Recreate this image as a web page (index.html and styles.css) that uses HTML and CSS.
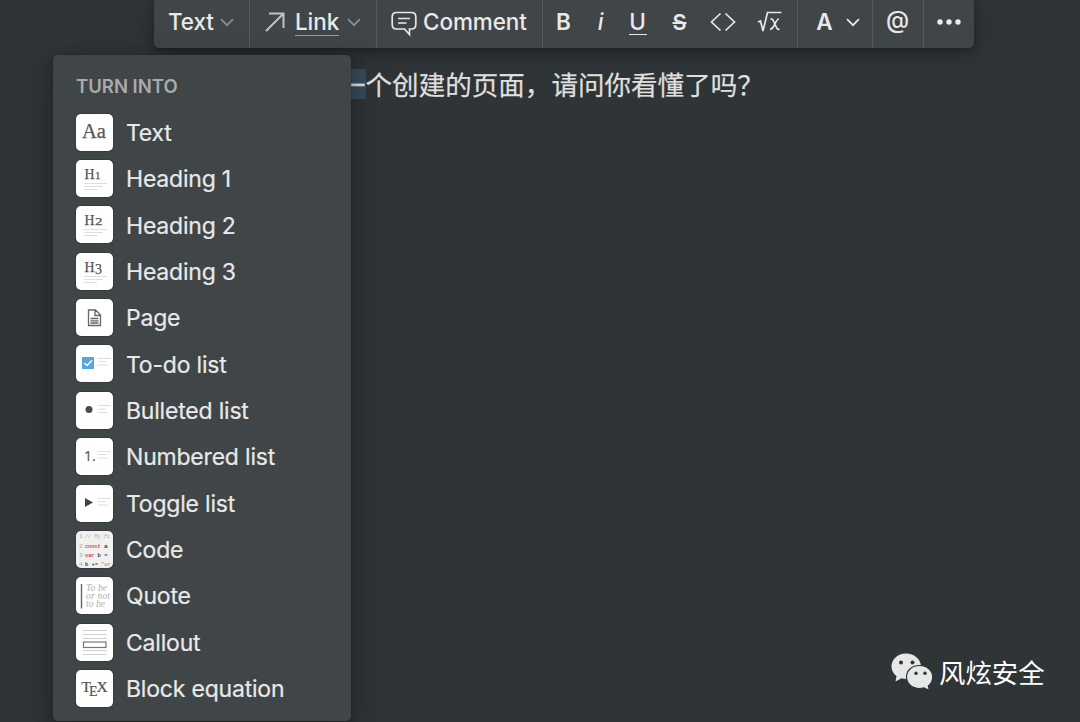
FILE: index.html
```
<!DOCTYPE html>
<html lang="en">
<head>
<meta charset="utf-8">
<title>Turn into</title>
<link rel="stylesheet" href="styles.css">
</head>
<body>
<main class="page">
  <p class="line"><span class="selected">一</span><span>个创建的页面，请问你看懂了吗？</span></p>

  <nav class="toolbar">
    <div class="group group-text"><span class="label">Text</span>
      <svg class="chev dim" viewBox="0 0 14 9"><path d="M1 1.200l6 6 6-6"/></svg></div>
    <div class="group group-link">
      <svg class="arrow" viewBox="0 0 20 20"><path d="M1 19L18.500 1.500M4 1.500H18.500V16"/></svg>
      <span class="label link">Link</span>
      <svg class="chev dim" viewBox="0 0 14 9"><path d="M1 1.200l6 6 6-6"/></svg></div>
    <div class="group group-comment">
      <svg class="bubble" viewBox="0 0 26 26"><path d="M5.500 1.500H20.500Q24.800 1.500 24.800 6V13.500Q24.800 18 20.500 18H18.500V23.500L13.500 18H5.500Q1.200 18 1.200 13.500V6Q1.200 1.500 5.500 1.500ZM7 7.500H19M7 12H15.500"/></svg>
      <span class="label">Comment</span></div>
    <div class="group group-format">
      <span class="glyph bold">B</span>
      <span class="glyph italic">i</span>
      <span class="glyph under">U</span>
      <span class="glyph strike">S</span>
      <svg class="code-icon" viewBox="0 0 26 20"><path d="M10.500 1.500L1.500 10l9 8.500M15.500 1.500l9 8.500-9 8.500"/></svg>
      <svg class="root-icon" viewBox="0 0 26 22"><path d="M1 11l2.500-1 2.500 10L10.500 1.500H24.500M13.500 8Q15.500 7.500 16.500 10L19.500 16.500Q20.500 19 22.500 18M22 8Q20 8 18 13Q15.500 18 13 18.500"/></svg>
    </div>
    <div class="group group-color"><span class="glyph bold">A</span>
      <svg class="chev" viewBox="0 0 14 9"><path d="M1 1.200l6 6 6-6"/></svg></div>
    <div class="group group-at"><span class="at">@</span></div>
    <div class="group group-more"><svg class="dots" viewBox="0 0 24 6"><circle cx="3" cy="3" r="2.700"/><circle cx="12" cy="3" r="2.700"/><circle cx="21" cy="3" r="2.700"/></svg></div>
  </nav>

  <section class="menu">
    <h2 class="menu-title">TURN INTO</h2>
    <ul class="items">
      <li class="item"><svg class="tile" viewBox="0 0 37 37"><text class="serif" x="6" y="24" font-size="20.500" textLength="24" lengthAdjust="spacingAndGlyphs">Aa</text></svg><span>Text</span></li>
      <li class="item"><svg class="tile" viewBox="0 0 37 37"><text class="serif" x="8.500" y="19" font-size="15" textLength="10" lengthAdjust="spacingAndGlyphs">H</text><text class="serif" x="19" y="19" font-size="11">1</text><path class="rule" d="M8 23.500H31M8 26.500H27M8 29.500H21"/></svg><span>Heading 1</span></li>
      <li class="item"><svg class="tile" viewBox="0 0 37 37"><text class="serif" x="8.500" y="19" font-size="15" textLength="10" lengthAdjust="spacingAndGlyphs">H</text><text class="serif" x="19" y="19" font-size="11" textLength="7.500" lengthAdjust="spacingAndGlyphs">2</text><path class="rule" d="M8 23.500H31M8 26.500H27M8 29.500H21"/></svg><span>Heading 2</span></li>
      <li class="item"><svg class="tile" viewBox="0 0 37 37"><text class="serif" x="8.500" y="19" font-size="15" textLength="10" lengthAdjust="spacingAndGlyphs">H</text><text class="serif" x="19" y="21" font-size="14">3</text><path class="rule" d="M8 23.500H31M8 26.500H27M8 29.500H21"/></svg><span>Heading 3</span></li>
      <li class="item"><svg class="tile" viewBox="0 0 37 37"><path class="doc" d="M12.500 11H19.500L24.500 16V26.500H12.500ZM19 11V16.500H24.500M14.500 19.500H22.500M14.500 21.800H22.500M14.500 24H22.500"/></svg><span>Page</span></li>
      <li class="item"><svg class="tile" viewBox="0 0 37 37"><rect x="6" y="12" width="12" height="12" rx=".8" fill="#5ba4df"/><path d="M8.500 18l2.500 2.500 5-5" fill="none" stroke="#fff" stroke-width="1.400"/><path class="rule" d="M21.500 13.500H35M21.500 16.500H30M21.500 20H31.500"/></svg><span>To-do list</span></li>
      <li class="item"><svg class="tile" viewBox="0 0 37 37"><circle cx="13" cy="17.500" r="3.500" fill="#4a4a4a"/><path class="rule" d="M21.500 13.500H35M21.500 17H30M21.500 20.500H31.500"/></svg><span>Bulleted list</span></li>
      <li class="item"><svg class="tile" viewBox="0 0 37 37"><text class="number" x="8" y="23" font-size="14">1.</text><path class="rule" d="M21.500 13.500H35M21.500 16.500H30M21.500 20H31.500"/></svg><span>Numbered list</span></li>
      <li class="item"><svg class="tile" viewBox="0 0 37 37"><path d="M9 13l8 4.500-8 4.500z" fill="#444"/><path class="rule" d="M21.500 13.500H35M21.500 16.500H30M21.500 20H31.500"/></svg><span>Toggle list</span></li>
      <li class="item"><svg class="tile tile-code" viewBox="0 0 37 37"><g class="mono"><text x="3" y="7.200" fill="#aaa">1</text><text x="9" y="7.200" fill="#aaa" font-style="italic" textLength="25" lengthAdjust="spacingAndGlyphs">// My fi</text><text x="3" y="16.500" fill="#aaa">2</text><text class="kw" x="9" y="16.500" textLength="15.500" lengthAdjust="spacingAndGlyphs">const</text><text class="id" x="28" y="16.500">a</text><text x="3" y="26" fill="#aaa">3</text><text class="kw" x="9" y="26" textLength="9.500" lengthAdjust="spacingAndGlyphs">var</text><text class="id" x="21.500" y="26" textLength="10" lengthAdjust="spacingAndGlyphs">b =</text><text x="3" y="35" fill="#aaa">4</text><text class="id" x="9" y="35" textLength="13" lengthAdjust="spacingAndGlyphs">b +=</text><text x="25" y="35" fill="#8d8956" textLength="9.500" lengthAdjust="spacingAndGlyphs">"or</text></g></svg><span>Code</span></li>
      <li class="item"><svg class="tile" viewBox="0 0 37 37"><path d="M5.500 7V31.500" stroke="#666" stroke-width="1.400"/><g class="quote"><text x="10" y="13.500" textLength="21">To be</text><text x="10" y="21.500" textLength="24">or not</text><text x="10" y="30" textLength="19">to be</text></g></svg><span>Quote</span></li>
      <li class="item"><svg class="tile" viewBox="0 0 37 37"><path class="rule dark" d="M7 6.500H30.500M7 10.500H30.500M7 14.500H30.500M7 26.500H30.500M7 30.500H30.500"/><rect x="7.500" y="18" width="22.500" height="5.500" fill="#fff" stroke="#777" stroke-width="1.200"/></svg><span>Callout</span></li>
      <li class="item"><svg class="tile" viewBox="0 0 37 37"><g class="tex"><text x="5.500" y="21.500">T</text><text x="13" y="26" textLength="8.500" lengthAdjust="spacingAndGlyphs">E</text><text x="20.500" y="21.500">X</text></g></svg><span>Block equation</span></li>
    </ul>
  </section>

  <div class="watermark">
    <svg class="wechat" viewBox="0 0 42 38"><path d="M15 .5C6.500.5.500 6.500.500 13.500c0 4 2 7.300 5 9.500L4.500 28.500l6-3.200c1.500.4 3 .6 4.700.6C23.500 26 30 20.500 30 13.500S23.500.5 15 .5z"/><path class="front" d="M28.500 12.500c-7.500 0-13 5-13 11.500s5.500 11.500 13 11.500c1.500 0 3-.2 4.500-.7l5.500 2.700-1.200-4.500c2.700-2.200 4.400-5.300 4.400-9 0-6.500-5.700-11.500-13.200-11.500z"/><g class="eyes"><circle cx="10" cy="9.500" r="2"/><circle cx="21.500" cy="9.500" r="2"/><circle cx="25" cy="20.200" r="1.700"/><circle cx="34" cy="20.200" r="1.700"/></g></svg>
    <span>风炫安全</span>
  </div>
</main>
</body>
</html>
```
FILE: styles.css
```
* { box-sizing: border-box; }
body { margin: 0; background: #2f3437; font-family: Inter, "Noto Sans CJK SC", sans-serif; color: #e8e9e9; }
.page { position: relative; width: 1080px; height: 722px; overflow: hidden; }
.line { margin: 0; padding: 64px 0 0 339px; font: 26.550px/40px "Noto Sans CJK SC", sans-serif; color: #dedfdf; white-space: nowrap; -webkit-text-stroke: .25px #dedfdf; }
.selected { display: inline-block; height: 30px; line-height: 30px; background: #354c5c; }

.toolbar { position: absolute; left: 154px; top: 0; width: 820px; height: 48px; display: flex; background: #404547; border-radius: 0 0 5px 5px; box-shadow: 0 5px 22px rgba(0,0,0,.3), 0 2px 5px rgba(0,0,0,.2); }
.group { display: flex; align-items: center; height: 48px; padding: 0 0 4px 14px; border-right: 1.500px solid #54595b; }
.group:last-child { border-right: 0; }
.group svg, .group span { flex: none; }
.group svg { fill: none; stroke: #e6e7e7; stroke-width: 1.700; }
.label { font-size: 22.500px; line-height: 28px; font-weight: 500; letter-spacing: -.1px; }
.group-text { width: 96px; }
.group-text .label { width: 44px; }
.group-text .chev { margin-left: 8px; }
.group-link { width: 127px; padding-left: 15px; }
.group-comment { width: 166px; padding-left: 14px; }
.group-format { width: 255px; padding-left: 12.500px; }
.group-color { width: 75px; padding-left: 17px; }
.group-at { width: 51px; padding-left: 13px; }
.group-more { width: 50px; padding-left: 13px; }
.chev { width: 14px; height: 9px; }
.group .dim { stroke: #8b8e90; }
.arrow { width: 20px; height: 20px; margin-right: 10px; }
.group .arrow { stroke: #c0c2c3; stroke-width: 2; }
.link { border-bottom: 1.500px solid #989b9c; margin-right: 8px; line-height: 27px; }
.bubble { width: 26px; height: 26px; margin: 3px 6px 0 0; }
.glyph { font-size: 22.500px; line-height: 28px; text-align: center; }
.bold { width: 16px; font-weight: 600; }
.italic { width: 12px; margin-left: 23px; font-style: italic; font-weight: 500; }
.under { width: 18px; margin-left: 22px; border-bottom: 1.500px solid #e6e7e7; line-height: 24px; font-weight: 500; }
.strike { width: 16px; margin-left: 25px; font-size: 21.500px; font-weight: 600; text-decoration: line-through; text-decoration-thickness: 1.500px; }
.code-icon { width: 26px; height: 20px; margin-left: 22.500px; }
.root-icon { width: 26px; height: 22px; margin-left: 21px; }
.group-color .bold { width: 19px; margin-right: 12px; }
.at { font-size: 23.500px; line-height: 28px; font-weight: 500; margin-top: -4px; }
.group .dots { width: 24px; height: 6px; fill: #ebecec; stroke: none; }

.menu { position: absolute; left: 53px; top: 55px; width: 298px; height: 666px; padding: 19px 23px; background: #404547; border-radius: 5px; box-shadow: 0 0 0 1px rgba(15,15,15,.12), 0 5px 14px rgba(15,15,15,.25), 0 14px 36px rgba(15,15,15,.3); }
.menu-title { margin: 0 0 16px; font-size: 18.500px; line-height: 24px; font-weight: 600; color: #a9abac; }
.items { margin: 0; padding: 0; list-style: none; display: grid; grid-auto-rows: 36.500px; row-gap: 9.850px; }
.item { display: flex; align-items: center; gap: 13px; font-size: 23px; line-height: 30px; letter-spacing: -.2px; white-space: nowrap; }
.item > span { padding-top: 1.400px; -webkit-text-stroke: .2px #e8e9e9; }
.tile { flex: none; width: 37px; height: 37px; border-radius: 5px; background: #fff; box-shadow: 0 0 0 1px rgba(15,15,15,.15); overflow: hidden; letter-spacing: 0; }
.tile-code { background: #f1f1f0; }
.serif { font-family: "Liberation Serif", serif; font-weight: 400; fill: #555; stroke: #555; stroke-width: .25; }
.rule { fill: none; stroke: #dedede; stroke-width: 1.100; }
.rule.dark { stroke: #d0d0d0; }
.doc { fill: none; stroke: #666; stroke-width: 1.300; }
.number { font-family: "Open Sans", sans-serif; fill: #555; stroke: #555; stroke-width: .2; }
.mono { font: 6.200px "Liberation Mono", monospace; }
.kw { fill: #d94450; font-weight: bold; }
.id { fill: #444; font-weight: bold; }
.quote { font: italic 9.500px "Liberation Serif", serif; fill: #b0b0b0; }
.tex { font: 15.500px "Liberation Serif", serif; fill: #505050; stroke: #505050; stroke-width: .2; }

.watermark { position: absolute; left: 891px; top: 652px; display: flex; align-items: center; gap: 6px; font: 26.400px/40px "Noto Sans CJK SC", sans-serif; color: #fff; white-space: nowrap; }
.wechat { width: 42px; height: 38px; fill: #e6e8e7; }
.front { stroke: #2f3437; stroke-width: 1.200; }
.eyes { fill: #2f3437; }
```
